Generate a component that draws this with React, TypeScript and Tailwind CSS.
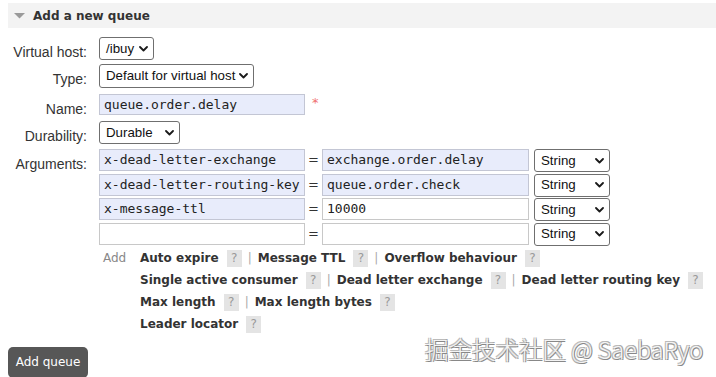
import React from "react";

const sans = { fontFamily: '"DejaVu Sans", Verdana, sans-serif' };
const arial = { fontFamily: '"Liberation Sans", Arial, sans-serif' };
const mono = { fontFamily: '"DejaVu Sans Mono", monospace' };

function Chevron() {
  return (
    <svg width="9" height="6" viewBox="0 0 9 6" className="shrink-0">
      <polyline points="1,1 4.5,4.5 8,1" fill="none" stroke="#1a1a1a" strokeWidth="1.8" strokeLinecap="round" strokeLinejoin="round" />
    </svg>
  );
}

function Sel({ className, text }: { className: string; text: string }) {
  return (
    <div
      className={`flex items-center justify-between border border-[#6f6f6f] rounded-[3px] bg-white pl-[6px] pr-[5px] text-[13.3px] text-[#111] ${className}`}
      style={arial}
    >
      <span className="whitespace-nowrap">{text}</span>
      <Chevron />
    </div>
  );
}

function Inp({ className, text, filled }: { className: string; text: string; filled?: boolean }) {
  return (
    <div
      className={`flex items-center border pl-[4px] text-[13px] text-[#222] whitespace-nowrap ${filled ? "bg-[#e8ecfb] border-[#c3c6d4]" : "bg-white border-[#c8c8c8]"} ${className}`}
      style={mono}
    >
      {text}
    </div>
  );
}

function Label({ children }: { children: React.ReactNode }) {
  return (
    <div className="w-[88px] shrink-0 text-right pr-[1px] text-[14px] text-[#333] leading-none pt-[8px]" style={arial}>
      {children}
    </div>
  );
}

function Help() {
  return (
    <span className="inline-flex items-center justify-center w-[15px] h-[17px] bg-[#e4e4e4] text-[#999] font-normal text-[12px] ml-[8px] align-middle">?</span>
  );
}

function Sep() {
  return <span className="text-[#aaa] font-normal mx-[6px]">|</span>;
}

function L({ children }: { children: React.ReactNode }) {
  return <span className="font-bold text-[#333]">{children}</span>;
}

function ArgRow({ k, v, filled }: { k: string; v: string; filled?: "both" | "key" | "none" }) {
  return (
    <div className="flex items-start h-[23px]">
      <Inp className="w-[206px] h-[22px]" text={k} filled={filled === "both" || filled === "key"} />
      <div className="w-[17px] text-center text-[13px] text-[#333] leading-[22px]" style={sans}>=</div>
      <Inp className="w-[207px] h-[22px]" text={v} filled={filled === "both"} />
      <Sel className="ml-[5px] w-[76px] h-[23px]" text="String" />
    </div>
  );
}

export default function App() {
  return (
    <div className="w-[716px] h-[377px] bg-white relative overflow-hidden" style={sans}>
      <div className="ml-[8px] mt-[3px] h-[25px] bg-[#f3f3f3] flex items-center">
        <svg width="11" height="6" viewBox="0 0 11 6" className="ml-[6px]">
          <polygon points="0,0 11,0 5.5,5.5" fill="#9a9a9a" />
        </svg>
        <span className="ml-[8px] font-bold text-[12px] text-[#333]">Add a new queue</span>
      </div>

      <div className="mt-[9px] flex h-[23px]">
        <Label>Virtual host:</Label>
        <Sel className="ml-[11px] w-[55px] h-[23px]" text="/ibuy" />
      </div>
      <div className="mt-[4px] flex h-[24px]">
        <Label>Type:</Label>
        <Sel className="ml-[11px] w-[155px] h-[24px]" text="Default for virtual host" />
      </div>
      <div className="mt-[6px] flex h-[21px]">
        <Label>Name:</Label>
        <Inp className="ml-[11px] w-[206px] h-[21px]" text="queue.order.delay" filled />
        <span className="ml-[7px] text-[#f07070] text-[13px] leading-none pt-[2px]">*</span>
      </div>
      <div className="mt-[6px] flex h-[23px]">
        <Label>Durability:</Label>
        <Sel className="ml-[11px] w-[81px] h-[23px]" text="Durable" />
      </div>

      <div className="mt-[5px] flex">
        <Label>Arguments:</Label>
        <div className="ml-[11px] flex flex-col gap-y-[1.5px]">
          <ArgRow k="x-dead-letter-exchange" v="exchange.order.delay" filled="both" />
          <ArgRow k="x-dead-letter-routing-key" v="queue.order.check" filled="both" />
          <ArgRow k="x-message-ttl" v="10000" filled="key" />
          <ArgRow k="" v="" filled="none" />
        </div>
      </div>

      <div className="mt-[1px] flex text-[12px] leading-[22px]">
        <div className="ml-[103px] w-[37px] text-[#888]">Add</div>
        <div className="flex flex-col">
          <div className="whitespace-nowrap">
            <L>Auto expire</L><Help /><Sep /><L>Message TTL</L><Help /><Sep /><L>Overflow behaviour</L><Help />
          </div>
          <div className="whitespace-nowrap">
            <L>Single active consumer</L><Help /><Sep /><L>Dead letter exchange</L><Help /><Sep /><L>Dead letter routing key</L><Help />
          </div>
          <div className="whitespace-nowrap">
            <L>Max length</L><Help /><Sep /><L>Max length bytes</L><Help />
          </div>
          <div className="whitespace-nowrap">
            <L>Leader locator</L><Help />
          </div>
        </div>
      </div>

      <button className="ml-[8px] mt-[12px] w-[80px] h-[31px] rounded-[5px] bg-[#575757] text-white text-[12px] flex items-center justify-center" style={sans}>
        Add queue
      </button>

      <div
        className="absolute left-[425px] top-[334px] text-[23.5px] leading-[30px] text-[#f4f4f4] whitespace-nowrap font-light"
        style={{
          fontFamily: '"Noto Sans CJK SC", "Noto Sans", sans-serif',
          textShadow: "1px 1px 0 #888, -1px -1px 0 #bbb, 1px -1px 0 #aaa, -1px 1px 0 #aaa",
        }}
      >
        掘金技术社区 @ SaebaRyo
      </div>
    </div>
  );
}
